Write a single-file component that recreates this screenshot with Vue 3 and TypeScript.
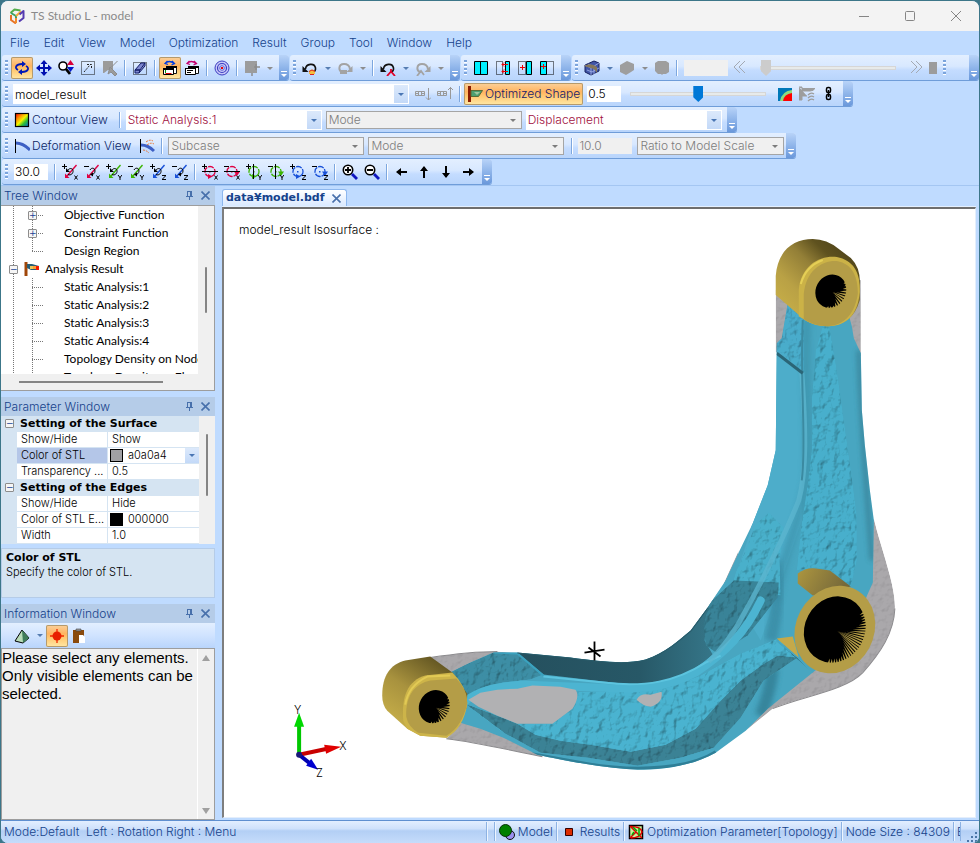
<script setup lang="ts">
import { h, ref } from 'vue'

interface Tool {
  kind: 'btn' | 'sep' | 'drop'
  icon?: string
  label?: string
  active?: boolean
  disabled?: boolean
}

const btn = (icon: string, label: string, active = false, disabled = false): Tool => ({ kind: 'btn', icon, label, active, disabled })
const drop = (label: string, disabled = false): Tool => ({ kind: 'drop', label, disabled })
const sep: Tool = { kind: 'sep' }

function axisMark(axis: string): string {
  if (axis === 'x') return '<path d="M12.500 11.500l3 4M15.500 11.500l-3 4" stroke="#000" fill="none"/>'
  if (axis === 'y') return '<path d="M12 11l2 2.500L16 11M14 13v3" stroke="#000" fill="none"/>'
  return '<path d="M12 11.500h4M15.500 12l-3 3M12 15.500h4" stroke="#000" fill="none"/>'
}
function signMark(sign: string): string {
  return `<path d="${sign === '+' ? 'M0 2.500h5M2.500 0v5' : 'M0 2.500h5'}" stroke="#000" fill="none"/>`
}
function rotIcon(sign: string, axis: string, color: string): string {
  const loop = sign === '+'
    ? '<path d="M6 10.500C9 12 11.500 9 11 6.500 10.500 4 7.500 4 6 6" stroke="#000" fill="none"/><path d="M4 4v4h4z"/>'
    : '<path d="M6 6C7.500 3 11 4 11 7c0 2.500-2 3.500-3.500 3.500" stroke="#000" fill="none"/><path d="M9 8.500v4L6 10.500z"/>'
  return `${signMark(sign)}<path d="M14.500 1L5 12" stroke="${color}" stroke-width="1.400" fill="none"/><path d="M3 9.500V14h4.500z" fill="${color}"/>${loop}${axisMark(axis)}`
}
function spinIcon(sign: string, axis: string, color: string): string {
  const bar = axis === 'x' ? '<path d="M0 7.500h16" stroke="#000"/>' : axis === 'y' ? '<path d="M7.500 0v15" stroke="#000"/>' : ''
  const tip = sign === '+' ? 'M6 10l4.500 2.500L6 15z' : 'M10 7.500h6L13 12z'
  return `${signMark(sign)}<circle cx="8" cy="7.500" r="5" fill="none" stroke="${color}" stroke-width="1.300" stroke-dasharray="6 1"/><path d="${tip}" fill="${color}"/><rect x="7" y="7" width="1.500" height="1.500" fill="${color}"/>${bar}${axisMark(axis)}`
}

const undoArc = (c: string, extra: string) => `<path d="M3.500 9C4 3.500 12.500 2.500 13.500 8c.3 2.500-1.500 4-3 4.500" fill="none" stroke="${c}" stroke-width="1.600"/><path d="M.5 6v6h6z" fill="${c}"/>${extra}`
const redoArc = (c: string, extra: string) => `<path d="M6 12C1 12 1 4 7 4c4 0 5.500 2 6 5" fill="none" stroke="${c}" stroke-width="2"/><path d="M15.500 6v6h-6z" fill="${c}"/>${extra}`

const icons: Record<string, string> = {
  logo: '<g fill="none" stroke-width="2" stroke-linejoin="round"><path d="M2 7v5l5 3.500" stroke="#e87326"/><path d="M1.500 5l4-3.500 6 1" stroke="#54ad4a"/><path d="M2 5l5 3v3" stroke="#3ba268"/><path d="M7 10v5" stroke="#f08a2a"/><path d="M7 8l5-4.500" stroke="#efa93a"/><path d="M10 13.500l4.500-3.500V3L10.500 6.500" stroke="#553bb0"/></g>',
  rotate: '<path d="M4 10C0 8 2 4 8 4h1M12 6c4 2 2 6-4 6H7" fill="none" stroke="#0018b8" stroke-width="1.800"/><path d="M8 1v6l4-3zM8 9v6l-4-3z" fill="#0018b8"/>',
  move: '<path d="M8 0l3.500 4H9v3h3V4.500L16 8l-4 3.500V9H9v3h2.500L8 16l-3.500-4H7V9H4v2.500L0 8l4-3.500V7h3V4H4.500z" fill="#0010b0"/>',
  zoom: '<circle cx="5" cy="6" r="4" fill="#fff" stroke="#000" stroke-width="1.600"/><path d="M8 9l4 5" stroke="#000" stroke-width="2.800"/><path d="M12.500 0L16 5H9z" fill="#d8003a"/><path d="M9 7h7l-3.500 5z" fill="#0018c8"/>',
  fit: '<rect x="1.500" y="1.500" width="13" height="13" fill="none" stroke="#111" stroke-dasharray="1 1"/><path d="M4 12l6-7M7 4.500h4.500V9" stroke="#222" stroke-dasharray="2 1" fill="none"/>',
  pick: '<path d="M1 1h10v9H6l-4 3H1z" fill="#9b9b9b"/><path d="M15.500 1l-6 6M8 7l7 7-2 2-4-4-3 2z" stroke="#8c8c8c" fill="#9b9b9b"/>',
  erase: '<rect x="1.500" y="2.500" width="13" height="12" fill="none" stroke="#111" stroke-dasharray="1 1"/><path d="M3 10l6-7h4l-5 7zM3 10v3h4l1-3zM7 13l6-7V3" fill="#7f88d0" stroke="#111a66"/>',
  copyView: '<path d="M3 3.500q4-4 9 0M5.500 1L3 3.500l3 1M10 1l2.500 2.500-3 1.500" fill="none" stroke="#003ee0" stroke-width="1.300"/><path d="M4.500 6.500h10v7h-10z" fill="#fff" stroke="#111"/><path d="M4 6h11v2H4z"/><path d="M1.500 8.500h10v6h-10z" fill="#fff" stroke="#000"/><path d="M1 8h11v2H1z"/><path d="M3.500 13.500h6" stroke="#d00" fill="none"/><path d="M3.500 10v3" stroke="#090"/>',
  copyList: '<path d="M3 3.500q4-4 9 0M5.500 1L3 3.500l3 1M10 1l2.500 2.500-3 1.500" fill="none" stroke="#c40070" stroke-width="1.300"/><path d="M4.500 6.500h10v7h-10z" fill="#fff" stroke="#111"/><path d="M4 6h11v2H4z"/><path d="M1.500 8.500h10v6h-10z" fill="#fff" stroke="#000"/><path d="M1 8h11v1H1z"/><path d="M3 10.500h6M3 12.500h4" stroke="#000"/>',
  target: '<circle cx="8" cy="8" r="7" fill="#c6c8f8" stroke="#3c3cc0"/><circle cx="8" cy="8" r="4.500" fill="none" stroke="#3c3cc0" stroke-width="1.200"/><circle cx="8" cy="8" r="2.300" fill="#d9daff" stroke="#6464d0"/><rect x="7" y="7" width="2" height="2" fill="#e00"/>',
  face: '<path d="M1 1h12v12H1z" fill="#9c9c9c"/><path d="M8 13v3M10 7h6M12 4v6" stroke="#8c8c8c" stroke-width="1.500"/>',
  undo: undoArc('#111', '<path d="M7 11q3-3 6 0v3H7z" fill="#f2c040"/><path d="M7 11.500q3-3 6 0M8 14.500h4" stroke="#d22" fill="none"/>'),
  redo: redoArc('#a3a3a3', '<path d="M3 10h7v4H3z" fill="#a3a3a3"/>'),
  undoNode: undoArc('#111', '<path d="M7 16l4-4.500 4 4.500M11 9v3" stroke="#e00028" stroke-width="1.800" fill="none"/>'),
  redoNode: redoArc('#a3a3a3', '<path d="M2 16l4-5 3 4" stroke="#a3a3a3" stroke-width="1.800" fill="none"/>'),
  splitFull: '<path d="M1.500 1.500h13v13h-13z" fill="#00f0ff" stroke="#000"/><path d="M7.500 1v14" stroke="#000"/>',
  splitMove: '<path d="M1.500 1.500h6v13h-6z" fill="none" stroke="#000" stroke-dasharray="1 1"/><path d="M10.500 1.500h4v13h-4z" fill="#00f0ff" stroke="#000"/><path d="M13 4.500H7M13 11.500H7M9 2.500l-2 2 2 2M9 9.500l-2 2 2 2" stroke="#e00" fill="none"/>',
  splitRight: '<path d="M1.500 1.500h7v13h-7z" fill="none" stroke="#000" stroke-dasharray="1 1"/><path d="M9.500 1.500h5v13h-5z" fill="#00f0ff" stroke="#000"/><path d="M3 7.500h5M5.500 5v5" stroke="#e00"/>',
  splitLeft: '<path d="M7.500 1.500h7v13h-7z" fill="none" stroke="#000" stroke-dasharray="1 1"/><path d="M1.500 1.500h6v13h-6z" fill="#00f0ff" stroke="#000"/><path d="M2 6.500h5M4.500 4v5" stroke="#e00"/>',
  cube: '<path d="M1 5l9-4 5 2v8l-8 4-6-3z" fill="#4156a6" stroke="#16205c"/><path d="M1 5l6 3 8-5M7 8v7M4 4l6 3v7M3 10l5 2 7-4" stroke="#a9b6ee" stroke-width=".8" fill="none"/><path d="M0 6q7-4 13 1v6l-3-4z" fill="#85775a"/>',
  solid: '<path d="M1 5l7-4 7 3v6l-3 2-5 3-6-3z" fill="#9e9e9e"/>',
  shield: '<path d="M1 3l3-2h8l3 2v9l-3 2H9l-1 1-1-1H4l-3-3z" fill="#9e9e9e"/>',
  shape: '<path d="M2.500 0v16" stroke="#8c1c00" stroke-width="3"/><path d="M4 4.500h11.500l-4 6H4z" fill="#4b9f71" stroke="#5c6b36"/><path d="M7 6l3 3 3-3z" fill="#9fc7a0"/>',
  down: '<path d="M.5 5.500h9v4h-9zM3.500 5v5M6.500 5v5M0 7.500h3M7 7.500h3" fill="none" stroke="#999"/><path d="M13.500 2v12M11 11.500l2.500 2.500 2.500-2.500" fill="none" stroke="#999"/>',
  up: '<path d="M.5 5.500h9v4h-9zM3.500 5v5M6.500 5v5M0 7.500h3M7 7.500h3" fill="none" stroke="#999"/><path d="M13.500 13V1M11 4l2.500-2.500L16 4" fill="none" stroke="#999"/>',
  iso: '<path d="M1 2h14v13H1z" fill="#0078b8"/><path d="M3 15Q5 5 15 4v11z" fill="#8fdc7e"/><path d="M6 15q1-7 9-8v8z" fill="#f00"/>',
  clampIcon: '<path d="M0 1h3v4h8q4 0 5-3M0 1v13h3v-4h5M3 4v6" fill="#9d9d9d" stroke="#9d9d9d"/><path d="M9 9q3-3 6-1M9 12q3-3 6-1M9 15q3-3 6-1" fill="none" stroke="#9d9d9d" stroke-width="1.300"/>',
  chain: '<g fill="none" stroke="#000" stroke-width="1.500"><rect x="5.500" y="1.500" width="4" height="5" rx="1.500"/><rect x="5.500" y="8.500" width="4" height="5" rx="1.500"/><path d="M7.500 4v7"/></g>',
  contour: '<rect x="1.500" y="1.500" width="13" height="13" fill="url(#rainbow)" stroke="#000" stroke-width="1.200"/>',
  deform: '<path d="M1.500 1v14" stroke="#000"/><path d="M2 5q7 0 14 7" stroke="#3d5fc4" stroke-width="3" fill="none"/>',
  deformAnim: '<path d="M1.500 1v14" stroke="#000"/><path d="M2 7q7 0 13 6" stroke="#3d5fc4" stroke-width="3" fill="none"/><path d="M7 4q4-3 7-1M8 7q4-3 7-1M4 12q3 0 6 3" stroke="#e8732c" stroke-dasharray="2 1" fill="none"/>',
  zoomIn: '<circle cx="6" cy="6" r="4.700" fill="#fff" stroke="#000" stroke-width="1.600"/><path d="M3 6h6M6 3v6" stroke="#000" stroke-width="1.800"/><path d="M10 10l5 5" stroke="#1016c0" stroke-width="2.800"/>',
  zoomOut: '<circle cx="6" cy="6" r="4.700" fill="#fff" stroke="#000" stroke-width="1.600"/><path d="M3 6h6" stroke="#000" stroke-width="1.800"/><path d="M10 10l5 5" stroke="#1016c0" stroke-width="2.800"/>',
  left: '<path d="M2 8l5-4v3h6v2H7v3z"/>',
  upArrow: '<path d="M8 2l4 5H9v7H7V7H4z"/>',
  downArrow: '<path d="M8 14l4-5H9V2H7v7H4z"/>',
  right: '<path d="M14 8L9 4v3H3v2h6v3z"/>',
  pyramid: '<path d="M8 2L1 13l8 2 6-5z" fill="#b8dcb8" stroke="#000"/><path d="M8 2l1 13 6-5z" fill="#3f7d5a"/>',
  point: '<path d="M8 1v14M1 8h14" stroke="#f02800" stroke-width="1.300"/><circle cx="8" cy="8" r="4.500" fill="#e82000"/>',
  paste: '<path d="M2 2h11v13H2z" fill="#8a4a0c"/><path d="M5 1h5v2H5z" fill="#999" stroke="#444" stroke-width=".6"/><path d="M8 7h4l2 2v6H8z" fill="#fff"/>',
  flag: '<path d="M2 1v14" stroke="#a0470a" stroke-width="3"/><path d="M3 3h5l7 2v4H7L3 7z" fill="#285d75"/><path d="M6 5h4v3H6z" fill="#e8c75a"/><path d="M9 5h3v3H9z" fill="#ff9a30"/><path d="M12 5h3v4h-3z" fill="#f01800"/>',
  spheres: '<circle cx="11" cy="11" r="4.500" fill="#9a8ff0" stroke="#111"/><circle cx="6.500" cy="6.500" r="6" fill="#008000" stroke="#063006"/>',
  square: '<path d="M4.500 4.500h7v7h-7z" fill="#dc2c00" stroke="#300"/>',
  topo: '<path d="M1.500 1.500h13v13h-13z" fill="#c9f29a" stroke="#000" stroke-width="1.500"/><path d="M2 2l12 12M2 14L8 8M3 2.500q10 0 11 5.500-2 6-11 6" stroke="#e00000" stroke-width="1.500" fill="none"/><path d="M5 3l4 4M11 4v8M4 11l2-3" stroke="#00a800" stroke-width="1.500"/>'
}
for (const [axis, color] of [['x', '#e00040'], ['y', '#3cb400'], ['z', '#1850d8']]) {
  for (const sign of ['+', '-']) {
    icons[`rot${sign}${axis}`] = rotIcon(sign, axis, color)
    icons[`spin${sign}${axis}`] = spinIcon(sign, axis, color)
  }
}

const Icon = (props: { name: string }) =>
  h('svg', { class: 'icon', viewBox: '0 0 16 16', 'aria-hidden': 'true', innerHTML: icons[props.name] })
Icon.props = ['name']

const menus = ['File', 'Edit', 'View', 'Model', 'Optimization', 'Result', 'Group', 'Tool', 'Window', 'Help']

const mainGroups: Tool[][] = [
  [
    btn('rotate', 'Rotate', true), btn('move', 'Move'), btn('zoom', 'Zoom'), btn('fit', 'Fit'), btn('pick', 'Pick', false, true), sep,
    btn('erase', 'Erase'), sep, btn('copyView', 'View windows', true), btn('copyList', 'List windows'), sep,
    btn('target', 'Center'), sep, btn('face', 'Face', false, true), drop('Face options', true)
  ],
  [
    btn('undo', 'Undo view'), drop('Undo view list'), btn('redo', 'Redo view', false, true), drop('Redo view list', true), sep,
    btn('undoNode', 'Undo'), drop('Undo list'), btn('redoNode', 'Redo', false, true), drop('Redo list', true)
  ],
  [btn('splitFull', 'Both halves'), btn('splitMove', 'Shift'), btn('splitRight', 'Add right'), btn('splitLeft', 'Add left')]
]

const rotTools: Tool[] = [
  ...['x', 'y', 'z'].flatMap(a => ['+', '-'].map(s => btn(`rot${s}${a}`, `Rotate ${s}${a}`))), sep,
  ...['x', 'y', 'z'].flatMap(a => ['+', '-'].map(s => btn(`spin${s}${a}`, `Spin ${s}${a}`))), sep,
  btn('zoomIn', 'Zoom in'), btn('zoomOut', 'Zoom out'), sep,
  btn('left', 'Pan left'), btn('upArrow', 'Pan up'), btn('downArrow', 'Pan down'), btn('right', 'Pan right')
]

interface TreeRow { text: string; expander?: string; root?: boolean; last?: boolean }
const tree: TreeRow[] = [
  { text: 'Objective Function', expander: '+' },
  { text: 'Constraint Function', expander: '+' },
  { text: 'Design Region', last: true },
  { text: 'Analysis Result', root: true, expander: '−' },
  { text: 'Static Analysis:1' },
  { text: 'Static Analysis:2' },
  { text: 'Static Analysis:3' },
  { text: 'Static Analysis:4' },
  { text: 'Topology Density on Node' },
  { text: 'Topology Density on Element' }
]

interface Section { title: string; rows: { name: string; value: string; swatch?: string; selected?: boolean }[] }
const sections: Section[] = [
  {
    title: 'Setting of the Surface',
    rows: [
      { name: 'Show/Hide', value: 'Show' },
      { name: 'Color of STL', value: 'a0a0a4', swatch: '#a0a0a4', selected: true },
      { name: 'Transparency ...', value: '0.5' }
    ]
  },
  {
    title: 'Setting of the Edges',
    rows: [
      { name: 'Show/Hide', value: 'Hide' },
      { name: 'Color of STL E...', value: '000000', swatch: '#000000' },
      { name: 'Width', value: '1.0' }
    ]
  }
]

const modelName = ref('model_result')
const threshold = ref('0.5')
const angle = ref('30.0')
const scale = ref('10.0')
const frame = ref(0)
const level = ref(50)

/** Facets that fan out between the centre of a bore and its lower right rim. */
function facets(cx: number, cy: number, rx: number, ry: number, count: number): string {
  let d = ''
  for (let i = 0; i < count; i++) {
    const a = (-55 + (i * 125) / (count - 1)) * (Math.PI / 180)
    const depth = Math.max(0.15, 0.95 - Math.abs(a - 0.05) * 1.05)
    const x1 = cx + Math.cos(a) * rx
    const y1 = cy + Math.sin(a) * ry
    const x2 = cx + Math.cos(a) * rx * (1 - depth)
    const y2 = cy + Math.sin(a) * ry * (1 - depth)
    const w = (Math.PI * ry) / (count * 4)
    const px = -Math.sin(a) * w
    const py = Math.cos(a) * w
    d += `M${(x1 + px).toFixed(1)} ${(y1 + py).toFixed(1)}L${x2.toFixed(1)} ${y2.toFixed(1)}L${(x1 - px).toFixed(1)} ${(y1 - py).toFixed(1)}z`
  }
  return d
}
const bores = [
  { cx: 830, cy: 291, rx: 15, ry: 17, n: 13 },
  { cx: 434, cy: 706, rx: 15, ry: 17, n: 13 },
  { cx: 834, cy: 629, rx: 30, ry: 34, n: 26 }
]
</script>

<template>
  <div class="window">
    <svg class="defs" aria-hidden="true">
      <linearGradient id="rainbow" x1="0" y1="0" x2="1" y2="1">
        <stop offset="0" stop-color="#f00" /><stop offset=".3" stop-color="#ff9a00" /><stop offset=".5" stop-color="#f4f400" />
        <stop offset=".7" stop-color="#30c030" /><stop offset="1" stop-color="#0060e0" />
      </linearGradient>
    </svg>

    <header class="titlebar">
      <Icon name="logo" />
      <span class="title">TS Studio L - model</span>
      <button class="win-btn" aria-label="Minimize"><svg viewBox="0 0 12 12"><path d="M1 6.500h10" /></svg></button>
      <button class="win-btn" aria-label="Maximize"><svg viewBox="0 0 12 12"><rect x="1.500" y="1.500" width="9" height="9" rx="1" /></svg></button>
      <button class="win-btn" aria-label="Close"><svg viewBox="0 0 12 12"><path d="M1 1l10 10M11 1L1 11" /></svg></button>
    </header>

    <nav class="menubar">
      <button v-for="m in menus" :key="m">{{ m }}</button>
    </nav>

    <div class="bar-row">
      <div v-for="(group, gi) in mainGroups" :key="gi" class="bar">
        <span class="grip"></span>
        <template v-for="(t, i) in group" :key="i">
          <span v-if="t.kind === 'sep'" class="sep"></span>
          <button v-else-if="t.kind === 'drop'" class="drop" :class="{ off: t.disabled }" :disabled="t.disabled" :aria-label="t.label"></button>
          <button v-else class="tool" :class="{ active: t.active }" :disabled="t.disabled" :aria-label="t.label"><Icon :name="t.icon!" /></button>
        </template>
        <span class="cap"></span>
      </div>
      <div class="bar wide">
        <span class="grip"></span>
        <button class="tool" aria-label="Mesh display"><Icon name="cube" /></button>
        <button class="drop" aria-label="Mesh options"></button>
        <button class="tool" disabled aria-label="Solid display"><Icon name="solid" /></button>
        <button class="drop off" disabled aria-label="Solid options"></button>
        <button class="tool" disabled aria-label="Shell display"><Icon name="shield" /></button>
        <span class="sep"></span>
        <input class="num off frame-box" disabled aria-label="Frame" />
        <button class="skip" disabled aria-label="Back"><svg viewBox="0 0 12 12"><path d="M6 0L0 6l6 6M11 0L5 6l6 6" /></svg></button>
        <input v-model="frame" class="slider long" type="range" disabled aria-label="Frame position" />
        <button class="skip" disabled aria-label="Forward"><svg viewBox="0 0 12 12"><path d="M1 0l6 6-6 6M6 0l6 6-6 6" /></svg></button>
        <button class="stop" disabled aria-label="Stop"></button>
        <span class="grip second"></span>
        <span class="cap"></span>
      </div>
    </div>

    <div class="bar-row">
      <div class="bar">
        <span class="grip"></span>
        <span class="combo name">
          <input v-model="modelName" aria-label="Result name" />
          <button class="arrow" aria-label="Show result names"></button>
        </span>
        <button class="tool" disabled aria-label="Next step"><Icon name="down" /></button>
        <button class="tool" disabled aria-label="Previous step"><Icon name="up" /></button>
        <span class="sep"></span>
        <button class="text-btn active"><Icon name="shape" />Optimized Shape</button>
        <input v-model="threshold" class="num" aria-label="Threshold" />
        <input v-model="level" class="slider" type="range" aria-label="Threshold level" />
        <button class="tool" aria-label="Isosurface"><Icon name="iso" /></button>
        <button class="tool" disabled aria-label="Clip"><Icon name="clampIcon" /></button>
        <button class="tool" aria-label="Link"><Icon name="chain" /></button>
        <span class="cap"></span>
      </div>
    </div>

    <div class="bar-row">
      <div class="bar">
        <span class="grip"></span>
        <button class="text-btn"><Icon name="contour" />Contour View</button>
        <span class="sep"></span>
        <span class="combo"><select aria-label="Case"><option>Static Analysis:1</option></select><i class="arrow"></i></span>
        <span class="combo off"><select aria-label="Contour mode" disabled><option>Mode</option></select><i class="arrow"></i></span>
        <span class="combo"><select aria-label="Quantity"><option>Displacement</option></select><i class="arrow"></i></span>
        <span class="cap"></span>
      </div>
    </div>

    <div class="bar-row">
      <div class="bar">
        <span class="grip"></span>
        <button class="text-btn"><Icon name="deform" />Deformation View</button>
        <button class="tool" aria-label="Animate deformation"><Icon name="deformAnim" /></button>
        <span class="sep"></span>
        <span class="combo off"><select aria-label="Subcase" disabled><option>Subcase</option></select><i class="arrow"></i></span>
        <span class="combo off"><select aria-label="Deformation mode" disabled><option>Mode</option></select><i class="arrow"></i></span>
        <span class="sep"></span>
        <input v-model="scale" class="num off scale-box" disabled aria-label="Scale" />
        <span class="combo off small"><select aria-label="Scale type" disabled><option>Ratio to Model Scale</option></select><i class="arrow"></i></span>
        <span class="cap"></span>
      </div>
    </div>

    <div class="bar-row">
      <div class="bar">
        <span class="grip"></span>
        <input v-model="angle" class="num angle-box" aria-label="Angle" />
        <span class="sep"></span>
        <template v-for="(t, i) in rotTools" :key="i">
          <span v-if="t.kind === 'sep'" class="sep"></span>
          <button v-else class="tool" :aria-label="t.label"><Icon :name="t.icon!" /></button>
        </template>
        <span class="cap"></span>
      </div>
    </div>

    <main class="workspace">
      <aside class="side">
        <section class="pane">
          <h2 class="pane-head">
            <span>Tree Window</span>
            <button class="pane-btn" aria-label="Pin tree"><svg viewBox="0 0 9 9"><path d="M2 .5h5M2.500 .5v5M5.500 .5v5M6.500 .5v5M1 5.500h7M4.500 6v3" /></svg></button>
            <button class="pane-btn" aria-label="Close tree"><svg viewBox="0 0 9 9"><path class="x" d="M.5 .5l8 8M8.500 .5l-8 8" /></svg></button>
          </h2>
          <div class="tree-box">
            <ul class="tree">
              <li v-for="row in tree" :key="row.text" :class="{ root: row.root }">
                <span class="guide outer"><i v-if="row.root" class="expander">{{ row.expander }}</i></span>
                <Icon v-if="row.root" name="flag" class="flag" />
                <span v-else class="guide inner" :class="{ last: row.last }"><i v-if="row.expander" class="expander">{{ row.expander }}</i></span>
                <span class="label">{{ row.text }}</span>
              </li>
            </ul>
            <div class="vscroll"><span class="thumb"></span></div>
            <div class="hscroll"><span class="thumb"></span></div>
          </div>
        </section>

        <section class="pane param-pane">
          <h2 class="pane-head">
            <span>Parameter Window</span>
            <button class="pane-btn" aria-label="Pin parameters"><svg viewBox="0 0 9 9"><path d="M2 .5h5M2.500 .5v5M5.500 .5v5M6.500 .5v5M1 5.500h7M4.500 6v3" /></svg></button>
            <button class="pane-btn" aria-label="Close parameters"><svg viewBox="0 0 9 9"><path class="x" d="M.5 .5l8 8M8.500 .5l-8 8" /></svg></button>
          </h2>
          <div class="grid-box">
            <table class="props">
              <tbody v-for="s in sections" :key="s.title">
                <tr class="cat">
                  <td class="gutter"><i class="expander">−</i></td>
                  <th colspan="2">{{ s.title }}</th>
                </tr>
                <tr v-for="r in s.rows" :key="r.name" :class="{ selected: r.selected }">
                  <td class="gutter"></td>
                  <td class="key">{{ r.name }}</td>
                  <td class="val">
                    <div class="val-in">
                      <span v-if="r.swatch" class="swatch" :style="{ background: r.swatch }"></span>
                      <span>{{ r.value }}</span>
                      <button v-if="r.selected" class="arrow" aria-label="Choose color"></button>
                    </div>
                  </td>
                </tr>
              </tbody>
            </table>
            <div class="vscroll"><span class="thumb"></span></div>
          </div>
          <div class="hint">
            <b>Color of STL</b>
            <span>Specify the color of STL.</span>
          </div>
        </section>

        <section class="pane info-pane">
          <h2 class="pane-head">
            <span>Information Window</span>
            <button class="pane-btn" aria-label="Pin information"><svg viewBox="0 0 9 9"><path d="M2 .5h5M2.500 .5v5M5.500 .5v5M6.500 .5v5M1 5.500h7M4.500 6v3" /></svg></button>
            <button class="pane-btn" aria-label="Close information"><svg viewBox="0 0 9 9"><path class="x" d="M.5 .5l8 8M8.500 .5l-8 8" /></svg></button>
          </h2>
          <div class="info-tools">
            <button class="tool" aria-label="Element type"><Icon name="pyramid" /></button>
            <button class="drop" aria-label="Element type list"></button>
            <button class="tool active" aria-label="Select"><Icon name="point" /></button>
            <button class="tool" aria-label="Paste"><Icon name="paste" /></button>
          </div>
          <div class="info-box">
            <div class="message">
              <p>Please select any elements.</p>
              <p>Only visible elements can be selected.</p>
            </div>
            <div class="info-scroll">
              <svg viewBox="0 0 10 6"><path d="M1 6L5 0l4 6z" /></svg>
              <svg viewBox="0 0 10 6"><path d="M1 0l4 6 4-6z" /></svg>
            </div>
          </div>
        </section>
      </aside>

      <section class="docs">
        <div class="tabs">
          <div class="tab">
            <span>data¥model.bdf</span>
            <button class="pane-btn" aria-label="Close tab"><svg viewBox="0 0 9 9"><path class="x" d="M.5 .5l8 8M8.500 .5l-8 8" /></svg></button>
          </div>
        </div>
        <div class="doc">
          <svg class="scene" viewBox="224 209 750 607" role="img" aria-label="Optimized link arm">
            <defs>
              <filter id="rough" x="0" y="0" width="1" height="1" color-interpolation-filters="sRGB">
                <feTurbulence type="fractalNoise" baseFrequency=".14 .11" numOctaves="4" seed="11" result="n" />
                <feDiffuseLighting in="n" surfaceScale="1.500" diffuseConstant="1.160" lighting-color="#fff" result="l">
                  <feDistantLight azimuth="225" elevation="60" />
                </feDiffuseLighting>
                <feComposite in="SourceGraphic" in2="l" operator="arithmetic" k1=".9" k2=".08" result="m" />
                <feComposite in="m" in2="SourceGraphic" operator="in" />
              </filter>
              <filter id="grain" x="0" y="0" width="1" height="1" color-interpolation-filters="sRGB">
                <feTurbulence type="fractalNoise" baseFrequency=".2" numOctaves="2" seed="3" result="n" />
                <feDiffuseLighting in="n" surfaceScale=".35" diffuseConstant="1.150" lighting-color="#fff" result="l">
                  <feDistantLight azimuth="235" elevation="60" />
                </feDiffuseLighting>
                <feComposite in="SourceGraphic" in2="l" operator="arithmetic" k1="1" result="m" />
                <feComposite in="m" in2="SourceGraphic" operator="in" />
              </filter>
              <filter id="soft" x="-1" y="-.2" width="3" height="1.400"><feGaussianBlur stdDeviation="2.500" /></filter>
              <linearGradient id="well" x1="0" y1="0" x2="1" y2="0"><stop offset="0" stop-color="#25505e" /><stop offset=".6" stop-color="#275867" /><stop offset="1" stop-color="#37798c" /></linearGradient>
              <linearGradient id="side" x1="0" y1=".8" x2=".75" y2="0"><stop offset="0" stop-color="#c9b048" /><stop offset=".3" stop-color="#b9a145" /><stop offset=".6" stop-color="#937f37" /><stop offset=".8" stop-color="#5f521f" /><stop offset="1" stop-color="#4f441a" /></linearGradient>
              <linearGradient id="side2" x1=".1" y1=".9" x2=".7" y2="0"><stop offset="0" stop-color="#cbb34b" /><stop offset=".5" stop-color="#a8923e" /><stop offset="1" stop-color="#5b4f1f" /></linearGradient>
              <linearGradient id="side3" x1="0" y1="0" x2="1" y2=".3"><stop offset="0" stop-color="#ad963f" /><stop offset="1" stop-color="#75683a" /></linearGradient>
              <clipPath id="bodyClip"><use href="#body" /></clipPath>
            </defs>

            <g fill="#aaa8ab" filter="url(#grain)">
              <path d="M775 290V352L800 362 860 356V280z" />
              <path d="M873 518C880 548 895 585 894 608 893 632 880 652 862 672 845 690 800 696 772 708L745 730 800 660z" />
              <path d="M430 657C450 654 475 651 497 651L520 653 450 680z" />
              <path d="M462 720L446 738C480 742 510 750 542 756L530 740z" />
              <path d="M738 550L723 583 734 580z" />
            </g>
            <path id="body" fill="#48a6c1" d="M787 303L803 317 848 315 851 326 853 338 860 353 861 410 864 445 869 490 873 520 872 582 864 600 840 650 812 672 767 708 745 730 715 752C690 766 660 769 637 769 600 767 560 759 537 754L503 737 480 728 460 722 466 696 450 672 470 662 493 652 517 652 570 657C600 661 625 664 645 659 665 652 678 640 690 630L707 607 725 580 738 552 752 523 767 485 775 450 776 353V343L781 338z" />

            <g clip-path="url(#bodyClip)">
              <path fill="url(#well)" d="M517 652L570 657C600 661 625 664 645 659 665 652 678 640 690 630L720 588 707 607 704 640 712 654 690 673 670 681 643 685 603 681 543 674z" />
              <path d="M776 345h25V520L760 640 730 590 750 530z" fill="#4dadca" />
              <path d="M806 320C803 380 810 440 806 480 800 520 780 560 776 600" fill="none" stroke="#3b8ea6" stroke-width="9" filter="url(#soft)" opacity=".55" />
              <path d="M774 560Q780 600 770 640" fill="none" stroke="#3787a0" stroke-width="12" filter="url(#soft)" opacity=".7" />
              <path d="M772 668Q770 690 760 715" fill="none" stroke="#317d93" stroke-width="12" filter="url(#soft)" opacity=".8" />
              <path d="M858 350C860 420 866 490 871 560" fill="none" stroke="#35798d" stroke-width="4" filter="url(#soft)" opacity=".8" />
              <g filter="url(#rough)">
                <path fill="#48b0cc" d="M823 322L815 350 811 400 811 450 806 490 800 530 796 570 815 567 830 570 850 586 856 560 856 515 850 470 843 420 836 370 828 322z" />
                <path fill="#49accb" d="M787 303L803 317V372L776 350V343L781 338z" />
                <path fill="#49b0cb" d="M768 512L754 525 747 545 735 572 730 590 780 595 779 560 783 527z" />
                <path fill="#398397" d="M733 580L708 603 703 625 705 645 718 654 747 635 777 597 778 582z" />
                <path fill="#3d8ea4" d="M448 672L470 662 493 652 517 652 543 674 530 679 503 682 485 686 465 697z" />
                <path fill="#4ab4d0" d="M465 703L497 715 517 723H552L573 707 578 691 640 691 670 686 700 675 740 653 777 638 797 657 763 680 740 717 713 747 680 757 637 765 587 757 540 752 500 730z" />
              </g>
              <g filter="url(#rough)">
                <path fill="#3b8194" d="M465 703L497 715 517 723 535 734 560 740 590 744 630 751 665 744 695 728 720 700 740 680 762 664 777 655 797 657 763 680 740 717 713 747 680 757 637 765 587 757 540 752 505 733z" />
              </g>
              <path d="M776 600L792 600 797 585 812 595 800 625 778 640 745 655 700 680" fill="none" />
              <path d="M463 702C480 688 500 686 520 684L600 687C640 690 670 686 695 672 725 652 745 632 760 600" fill="none" stroke="#4cb4d1" stroke-width="8" stroke-linecap="round" />
              <path d="M543 676L603 682C645 687 675 681 705 662L720 655" fill="none" stroke="#5cc4df" stroke-width="2" />
              <path d="M801 372C805 430 806 470 798 500 786 530 762 580 745 610 735 630 720 650 708 661" fill="none" stroke="#5cb6cf" stroke-width="5" opacity=".75" />
              <path d="M802 320C799 390 806 440 801 480" fill="none" stroke="#3b8aa1" stroke-width="2" />
              <path d="M776 353L802 373" stroke="#2b6576" stroke-width="3" />
              <path d="M493 652l24 1 26 22" fill="none" stroke="#3aa2bf" stroke-width="2" />
              <path d="M517 652L570 657C600 661 625 664 645 659 665 652 678 640 690 630L707 607" fill="none" stroke="#2a5b69" stroke-width="2" />
              <path d="M520 751L587 763C640 772 690 767 715 751" fill="none" stroke="#2f7f97" stroke-width="3" />
              <path d="M776 640L797 657 812 672" stroke="#48a6c1" stroke-width="2" />
            </g>

            <path fill="#b1b1b3" d="M468 699L480 692 497 689 517 688 532 685 560 686 575 689C579 694 576 702 572 708L552 723H517L497 715 478 706z" />
            <path fill="#b1b1b3" d="M636 699Q640 692 650 694L661 691Q663 702 650 706 642 705 636 699z" />
            <path fill="none" stroke="#8b8a8d" d="M446 738C480 742 510 750 542 756M430 657C450 654 475 651 497 651M894 608C893 632 880 652 862 672 845 690 800 696 772 708" />

            <path fill="url(#side)" d="M775 295V276C777 250 793 239 812 239Q826 239 838 249L850 258Q860 268 859 285L859 300Q852 325 828 326 812 326 803 319z" />
            <path fill="#cbb247" d="M798 316V290C800 265 820 255 836 257 852 260 860 272 859 292 857 315 845 326 828 326 812 326 803 319 798 316z" />
            <path fill="#b49d47" d="M803 319V294C805 270 822 260 836 261 852 264 857 277 857 294 853 318 840 326 825 326 814 325 808 322 803 319z" />
            <path d="M800 284Q805 266 822 260" fill="none" stroke="#e5cf56" stroke-width="2" />

            <path fill="url(#side2)" d="M382 695C382 675 390 664 405 660L430 656 452 672 467 693 466 708 447 737 420 735 407 728 387 710Q382 704 382 695z" />
            <path fill="#cdb449" d="M403 720C401 695 408 680 425 675L452 672Q466 685 467 703 463 728 446 737L420 735 407 728z" />
            <path fill="#b49d47" d="M406 716C405 695 415 683 430 680L456 678Q466 688 467 702 462 726 446 735L418 732Q408 726 406 716z" />
            <path d="M405 704Q408 685 427 676L450 675" fill="none" stroke="#e2ca55" stroke-width="2" />

            <path fill="url(#side3)" d="M797 573Q805 567 815 568L829 570 850 586 812 595 797 583z" />
            <path fill="#c4a94a" d="M776 638L792 636 798 657z" />
            <ellipse cx="834" cy="629" rx="39" ry="45" transform="rotate(28 834 629)" fill="#b49d47" />

            <g v-for="b in bores" :key="b.cx" :transform="`rotate(28 ${b.cx} ${b.cy})`">
              <ellipse :cx="b.cx" :cy="b.cy" :rx="b.rx" :ry="b.ry" fill="#000" />
              <path :d="facets(b.cx, b.cy, b.rx + 1, b.ry + 1, b.n)" fill="#b49d47" />
            </g>

            <path d="M594 641v19M584 652l20-3M588 647l12 9" stroke="#000" stroke-width="1.800" />

            <path d="M299 754V724" stroke="#00c800" stroke-width="4" /><path d="M299 712l5 14h-10z" fill="#00d800" />
            <path d="M299 754l28-6" stroke="#c80000" stroke-width="4" /><path d="M341 746l-15 7-2-9z" fill="#e00000" />
            <path d="M299 754l10 8" stroke="#0000b0" stroke-width="4" /><path d="M318 769l-12-4 5-7z" fill="#0000d0" />
            <circle cx="299" cy="754" r="3" fill="#181878" />
            <text x="294" y="713">Y</text><text x="339" y="749">X</text><text x="316" y="776">Z</text>
            <text class="caption" x="239" y="234">model_result Isosurface :</text>
          </svg>
        </div>
      </section>
    </main>

    <footer class="status">
      <span class="mode">Mode:Default&nbsp; Left : Rotation Right : Menu</span>
      <span class="cell blank"></span>
      <span class="cell"><Icon name="spheres" />Model</span>
      <span class="cell"><Icon name="square" />Results</span>
      <span class="cell"><Icon name="topo" />Optimization Parameter[Topology]</span>
      <span class="cell">Node Size : 84309</span>
      <span class="cell cut">E</span>
      <svg class="size-grip" viewBox="0 0 12 12"><path d="M9 1h2v2H9zM5 5h2v2H5zM9 5h2v2H9zM1 9h2v2H1zM5 9h2v2H5zM9 9h2v2H9z" /></svg>
    </footer>
  </div>
</template>

<style>
body { background: #3c7689; }
</style>

<style scoped>
.window {
  display: flex; flex-direction: column; min-height: 100vh; box-sizing: border-box;
  border: 1px solid #3c7689; border-radius: 8px; overflow: hidden;
  background: #bfdbff; color: #15428b; font: 300 12px/16px Inter, "Liberation Sans", sans-serif;
}
.window *, .window *::before, .window *::after { box-sizing: border-box; }
button, input, select { font: inherit; color: inherit; border: 0; margin: 0; padding: 0; background: none; border-radius: 0; }
.defs { width: 0; height: 0; position: absolute; }
.icon { width: 16px; height: 16px; flex: none; display: block; }

.titlebar { display: flex; align-items: center; height: 30px; background: #f3f3f3; color: #8a8a8a; padding-left: 8px; font-family: Lato, "Noto Sans", sans-serif; font-weight: 400; }
.title { flex: 1; padding-left: 6px; }
.win-btn { width: 46px; height: 30px; display: grid; place-items: center; }
.win-btn svg { width: 12px; height: 12px; fill: none; stroke: #858585; }

.menubar { display: flex; height: 24px; align-items: center; padding-left: 2px; }
.menubar button { padding: 0 7px; }

.bar-row { display: flex; gap: 1px; height: 26px; padding-left: 1px; }
.bar { display: flex; align-items: center; height: 26px; padding-top: 1px; border-bottom: 1px solid #6f9dd9; border-radius: 3px; background: linear-gradient(#e3efff, #d8e8ff 45%, #c4dcff 60%, #b9d5fb); }
.bar.wide { flex: 1; min-width: 0; }
.grip { width: 3px; height: 16px; margin: 0 3px; flex: none; background: repeating-linear-gradient(#7ba4dc 0 2px, #fff 2px 3px, transparent 3px 4px); }
.grip.second { margin: 0 20px 0 2px; }
.sep { width: 8px; height: 16px; flex: none; background: linear-gradient(90deg, transparent 3px, #7da7df 3px 4px, #fff 4px 5px, transparent 5px); }
.tool { width: 22px; height: 22px; display: grid; place-items: center; flex: none; }
.tool.active, .text-btn.active { background: linear-gradient(#fbd19c, #ffb460 40%, #ffc973 60%, #ffe8a6); box-shadow: inset 0 0 0 1px #b59a6c; border-radius: 2px; }
.drop { width: 13px; height: 22px; display: grid; place-items: center; flex: none; }
.drop::before { content: ""; border: 3px solid transparent; border-top-color: #567db1; border-bottom: 0; }
.drop.off::before { border-top-color: #8d8d8d; }
.cap { width: 10px; align-self: stretch; margin: -1px 0 0 3px; flex: none; display: flex; flex-direction: column; align-items: center; justify-content: flex-end; gap: 2px; padding-bottom: 3px; border-radius: 0 3px 3px 0; background: linear-gradient(#b8d3f8, #8fb5ea 50%, #6a98db); }
.cap::before { content: ""; width: 6px; height: 1px; background: #fff; }
.cap::after { content: ""; border: 3px solid transparent; border-top-color: #fff; border-bottom: 0; }

.num { width: 34px; height: 16px; background: #fff; color: #000; padding: 0 1px; line-height: 16px; flex: none; }
.num.off { background: #f0f0f0; color: #7c7c7c; }
.frame-box { width: 44px; margin: 0 6px 0 3px; }
.scale-box { width: 54px; margin: 0 5px 0 2px; }
.angle-box { margin: 0 3px; }
.skip { width: 12px; height: 14px; flex: none; }
.skip svg { width: 12px; height: 12px; fill: none; stroke: #a3a9b3; }
.stop { width: 8px; height: 12px; margin: 0 4px 0 7px; background: #9c9c9c; flex: none; }

.slider { appearance: none; height: 18px; width: 136px; margin: 0 8px 0 9px; }
.slider.long { flex: 1; width: 60px; min-width: 0; margin: 0 14px; }
.slider::-webkit-slider-runnable-track { height: 4px; background: #e7eaea; border: 1px solid #d6d6d6; }
.slider::-webkit-slider-thumb { appearance: none; width: 10px; height: 16px; margin-top: -7px; background: #0078d7; clip-path: polygon(0 0, 100% 0, 100% 70%, 50% 100%, 0 70%); }
.slider:disabled::-webkit-slider-thumb { background: #cccccc; }

.combo { display: grid; width: 196px; height: 20px; margin-right: 4px; background: #fff; color: #a01040; flex: none; }
.combo > * { grid-area: 1 / 1; }
.combo select, .combo input { appearance: none; width: 100%; height: 100%; padding: 0 2px; opacity: 1; outline: 0; }
.combo.name { width: 396px; margin: 0 3px 0 2px; color: #000; }
.combo.off { background: #f0f0f0; border: 1px solid #a5a5a5; color: #7c7c7c; height: 18px; }
.combo.small { width: 147px; margin-right: 1px; }
.combo + .cap { margin-left: 1px; }
.sep + .combo { margin-left: 2px; }
.text-btn + .sep { margin-left: 3px; }
.arrow { width: 14px; margin: 1px; justify-self: end; display: grid; place-items: center; background: linear-gradient(#dce9fb, #c3d9f8); }
i.arrow { pointer-events: none; }
.arrow::before { content: ""; border: 3px solid transparent; border-top-color: #4a76b4; border-bottom: 0; }
.combo.off .arrow { background: none; }
.combo.off .arrow::before { border-top-color: #7c7c7c; }
.text-btn { display: flex; align-items: center; gap: 2px; height: 22px; padding: 0 5px 0 3px; color: #0c1f66; white-space: nowrap; }
.text-btn.active { padding: 0 3px; margin-right: 4px; color: #15206a; }

.workspace { flex: 1; display: flex; min-height: 0; border-top: 1px solid #a4c6f2; }
.side { width: 214px; flex: none; display: flex; flex-direction: column; gap: 6px; }
.pane-head { display: flex; align-items: center; gap: 7px; height: 19px; margin: 0; padding: 0 5px 0 3px; background: #b5cce8; font-size: 12px; line-height: 18px; font-weight: inherit; }
.pane-head span { flex: 1; }
.pane-btn { width: 9px; height: 9px; display: block; }
.pane-btn svg { width: 9px; height: 9px; display: block; fill: none; stroke: #4870ab; }
.pane-btn .x { stroke-width: 1.6; }

.tree-box { display: grid; grid-template: 168px 16px / 1fr 16px; border: 1px solid #9d9d9d; border-left: 0; background: #f0f0f0; }
.tree { margin: 0; padding: 0 0 0 1px; list-style: none; overflow: hidden; background: #fff; color: #000; font: 400 12px/18px Lato, "Noto Sans", sans-serif; }
.tree li { display: flex; height: 18px; white-space: nowrap; }
.guide { flex: none; display: flex; align-items: center; }
.outer { width: 22px; padding-left: 7px; background: repeating-linear-gradient(#777 0 1px, transparent 1px 2px) 11px 0 / 1px 100% no-repeat; }
.inner { width: 40px; padding-left: 4px; background: repeating-linear-gradient(#777 0 1px, transparent 1px 2px) 8px 0 / 1px 100% no-repeat, repeating-linear-gradient(90deg, #777 0 1px, transparent 1px 2px) 8px 9px / 11px 1px no-repeat; }
.inner.last { background-size: 1px 9px, 11px 1px; }
.expander { width: 9px; height: 9px; display: grid; place-items: center; border: 1px solid #8d8d8d; border-radius: 1px; background: #f6f6f6; color: #1c3f94; font: 9px/7px "DejaVu Sans", sans-serif; }
.flag { margin-top: 1px; }
.root .label { padding-left: 5px; }
.vscroll { display: flex; justify-content: center; background: #f0f0f0; width: 16px; flex: none; }
.vscroll .thumb { width: 2px; border-radius: 1px; height: 46px; margin-top: 61px; background: #858585; }
.hscroll { display: flex; align-items: center; }
.hscroll .thumb { height: 2px; width: 144px; margin: 0 0 1px 18px; background: #858585; }

.grid-box { display: flex; background: #d5e4f2; color: #000; font: 300 11px/15px Inter, sans-serif; }
.props { flex: 1; border-collapse: separate; border-spacing: 0; table-layout: fixed; width: 100%; }
.props td, .props th { padding: 0; height: 16px; border-bottom: 1px solid #d5e4f2; text-align: left; white-space: nowrap; overflow: hidden; }
.props .gutter { width: 16px; background: #d5e4f2; padding-left: 4px; }
.props th { padding-left: 3px; font: 700 11px/15px "DejaVu Sans", sans-serif; background: #d5e4f2; }
.props .key, .props .val { background: #fff; }
.props .key { width: 92px; padding-left: 4px; border-right: 1px solid #d5e4f2; }
.props .selected .key { background: #b4c6e8; }
.val-in { display: flex; align-items: center; height: 15px; padding-left: 4px; }
.val-in .arrow { margin: 0 0 0 auto; height: 15px; }
.swatch { width: 13px; height: 13px; border: 1px solid #000; margin: 0 5px 0 -2px; }
.param-pane .vscroll .thumb { height: 62px; margin-top: 18px; }
.hint { display: flex; flex-direction: column; height: 50px; margin-top: 4px; padding: 2px 4px; border: 1px solid #b5cce8; background: #d5e4f2; color: #000; font-size: 11px; line-height: 14px; }
.hint b { font: 700 11px/14px "DejaVu Sans", sans-serif; }

.info-pane { flex: 1; display: flex; flex-direction: column; }
.info-tools { display: flex; align-items: center; height: 25px; padding-left: 10px; background: linear-gradient(#e3efff, #d0e3ff 50%, #b9d5fb); }
.info-box { flex: 1; display: flex; border: 1px solid #9d9d9d; background: #f0f0f0; color: #000; }
.message { flex: 1; }
.message p { margin: 0; font: 15px/18px "Liberation Sans", Arial, sans-serif; }
.info-scroll { width: 17px; flex: none; display: flex; flex-direction: column; justify-content: space-between; align-items: center; padding: 6px 0 5px; border-left: 1px solid #fff; }
.info-scroll svg { width: 10px; height: 6px; fill: #a0a0a0; }

.docs { flex: 1; min-width: 0; display: flex; flex-direction: column; padding: 3px 3px 2px 7px; }
.tabs { display: flex; height: 18px; border-bottom: 1px solid #e4f0ff; }
.tab { display: flex; align-items: center; gap: 8px; padding: 0 5px 0 3px; border: 1px solid #8db7ee; border-bottom: 0; border-radius: 3px 3px 0 0; background: linear-gradient(#fff, #d9e9ff); font: 700 11px/16px "DejaVu Sans", sans-serif; }
.doc { flex: 1; min-height: 0; display: flex; border: 1px solid #e4eefb; border-top: 2px solid #6e6e6e; border-left: 2px solid #7e7e7e; background: #fff; }
.scene { flex: 1; width: 100%; min-height: 500px; display: block; }
.scene text { font: 300 11px Inter, sans-serif; fill: #000; }
.scene .caption { font-size: 12px; }

.status { display: flex; align-items: center; height: 23px; border-top: 1px solid #5f8fd0; background: linear-gradient(#e2eeff, #cfe1fb 35%, #b3cff5 45%, #c5dcfb); padding-left: 3px; white-space: nowrap; }
.mode { flex: 1; }
.cell { display: flex; align-items: center; gap: 3px; height: 19px; padding: 0 3px 0 4px; border-left: 1px solid #8db2e3; box-shadow: inset 1px 0 #edf5ff; }
.blank { width: 7px; }
.cut { width: 8px; overflow: hidden; border-right: 1px solid #8db2e3; padding: 0 0 0 3px; }
.size-grip { width: 12px; height: 12px; align-self: flex-end; margin: 0 1px 0 5px; fill: #4a76a8; }
</style>
